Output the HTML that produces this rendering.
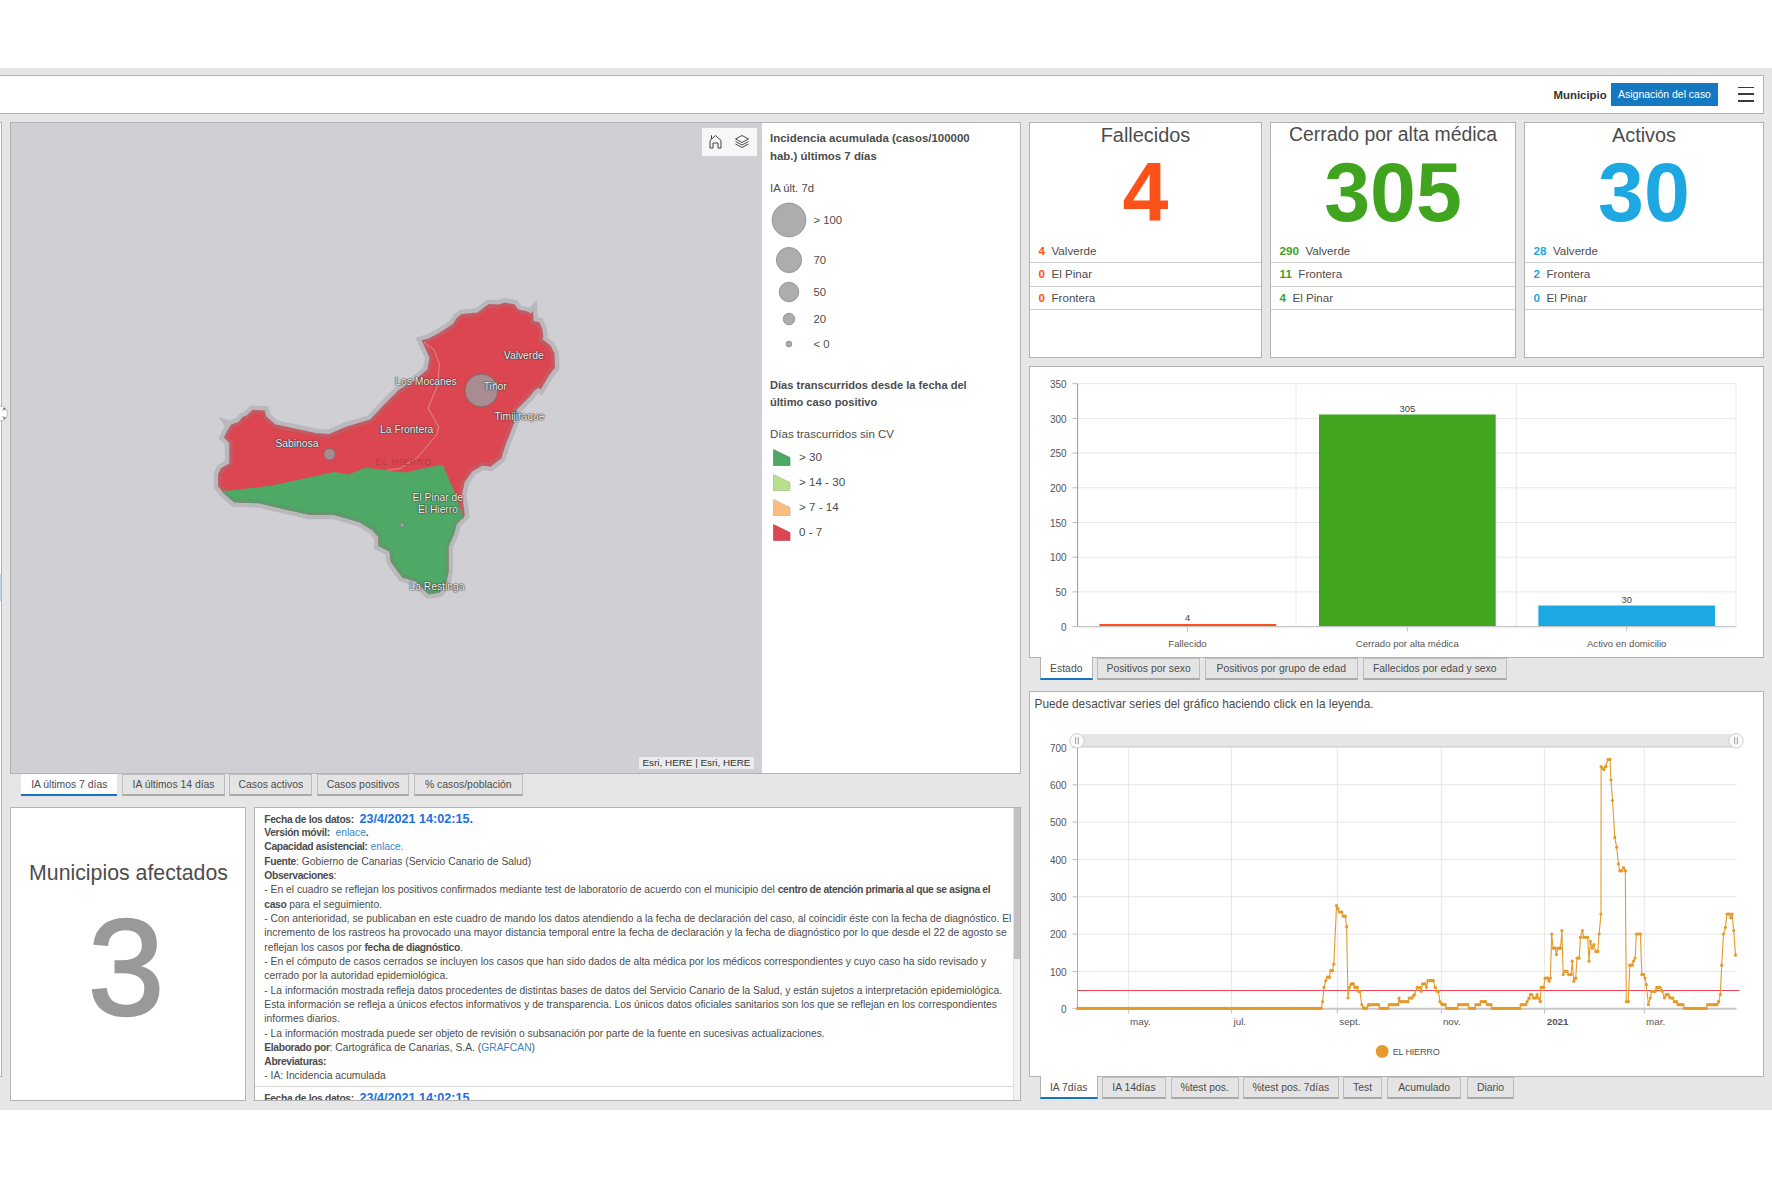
<!DOCTYPE html><html><head><meta charset="utf-8"><style>
*{box-sizing:border-box;margin:0;padding:0}
html,body{width:1772px;height:1181px;overflow:hidden;background:#fff;font-family:"Liberation Sans",sans-serif;color:#4c4c4c}
.a{position:absolute;white-space:nowrap}
.pnl{position:absolute;background:#fff;border:1px solid #b3b3b3}
.tab{position:absolute;background:#e6e6e6;border:1px solid #b5b5b5;border-top-color:#c8c8c8;font-size:10.4px;color:#555;text-align:center;white-space:nowrap}
.tab.act{background:#fff;border:none;border-bottom:2px solid #1a73c2}
.ham{position:absolute;left:1738px;width:16px;height:1.6px;background:#3a3a3a}
b{font-weight:bold}
</style></head><body>
<div class="a" style="left:0;top:68px;width:1772px;height:1042px;background:#e6e6e6"></div>
<div class="pnl" style="left:-2px;top:75px;width:1766px;height:39px"></div>
<div class="a" style="left:1553.5px;top:86.50px;font-size:11.4px;line-height:16px;color:#333;font-weight:bold;">Municipio</div>
<div class="a" style="left:1611px;top:83px;width:107px;height:23px;background:#1479c0"></div>
<div class="a" style="left:1611.0px;width:107px;text-align:center;top:87.00px;font-size:10.45px;line-height:15px;color:#fff;">Asignación del caso</div>
<div class="ham" style="top:86.6px"></div>
<div class="ham" style="top:93.3px"></div>
<div class="ham" style="top:100.0px"></div>
<div class="pnl" style="left:-10px;top:122px;width:12px;height:955px"></div>
<div class="a" style="left:0;top:574px;width:1px;height:27px;background:#bcd6ec"></div>
<svg class="a" style="left:0;top:400px" width="12" height="28" viewBox="0 0 12 28"><circle cx="0" cy="13.5" r="7.6" fill="#fff" stroke="#b8b8b8" stroke-width="1"/><path d="M2.5 10.5 L5 8.5 M5 8.5 L3.2 8.5 M5 8.5 L5 10.2 M2.5 16.5 L5 18.5 M5 18.5 L3.2 18.5 M5 18.5 L5 16.8" stroke="#777" stroke-width="1" fill="none"/></svg>
<div class="pnl" style="left:10px;top:122px;width:1011px;height:652px"></div>
<div class="a" style="left:11px;top:123px;width:751px;height:650px;background:#d0cfd4;overflow:hidden"></div>
<svg class="a" style="left:0;top:0" width="762" height="773" viewBox="0 0 762 773">
<path d="M219.9 485.6 L219.9 474.4 L222.4 469.5 L231.1 464.5 L231.1 442.1 L226.1 437.2 L228.6 432.2 L232.3 426.0 L239.8 423.5 L243.5 418.6 L247.2 417.3 L253.5 411.7 L263.4 412.3 L264.6 417.3 L274.6 426.0 L315.5 434.7 L329.2 435.9 L346.6 428.5 L371.4 421.0 L383.8 407.4 L393.7 397.4 L400.0 391.3 L416.0 381.7 L429.0 370.4 L431.4 357.5 L424.1 341.5 L429.8 339.9 L440.0 334.6 L454.0 325.5 L458.2 319.0 L462.4 315.7 L478.2 314.3 L489.4 305.9 L498.7 306.4 L504.3 304.5 L513.6 305.9 L517.4 311.0 L527.6 313.4 L530.9 316.2 L531.5 315.5 L532.0 322.7 L538.0 323.6 L540.6 329.6 L541.5 337.0 L539.7 339.2 L549.0 346.6 L552.7 353.8 L553.2 367.0 L548.2 373.3 L540.2 386.8 L538.5 385.6 L532.6 389.9 L528.7 395.2 L514.2 409.8 L515.8 413.8 L504.5 442.8 L499.7 457.3 L490.1 464.9 L482.0 463.6 L471.1 470.3 L463.0 481.2 L460.3 494.7 L463.0 515.0 L460.3 517.8 L454.9 523.2 L452.2 534.0 L446.7 546.2 L446.7 572.0 L444.0 584.2 L438.6 590.9 L429.1 592.3 L419.6 582.8 L416.9 580.1 L403.4 576.0 L392.5 561.1 L391.2 550.3 L380.3 544.9 L380.3 536.7 L373.6 528.6 L360.0 520.5 L334.1 512.9 L309.3 513.0 L284.5 507.5 L259.7 501.5 L234.8 500.5 L223.7 490.6 Z" fill="#b9b8bd" stroke="#b9b8bd" stroke-width="12.5" stroke-linejoin="miter" stroke-miterlimit="3"/>
<path d="M218.5 417 L233 421.5 L228 431 Z" fill="#b9b8bd"/>
<path d="M219.9 485.6 L219.9 474.4 L222.4 469.5 L231.1 464.5 L231.1 442.1 L226.1 437.2 L228.6 432.2 L232.3 426.0 L239.8 423.5 L243.5 418.6 L247.2 417.3 L253.5 411.7 L263.4 412.3 L264.6 417.3 L274.6 426.0 L315.5 434.7 L329.2 435.9 L346.6 428.5 L371.4 421.0 L383.8 407.4 L393.7 397.4 L400.0 391.3 L416.0 381.7 L429.0 370.4 L431.4 357.5 L424.1 341.5 L429.8 339.9 L440.0 334.6 L454.0 325.5 L458.2 319.0 L462.4 315.7 L478.2 314.3 L489.4 305.9 L498.7 306.4 L504.3 304.5 L513.6 305.9 L517.4 311.0 L527.6 313.4 L530.9 316.2 L531.5 315.5 L532.0 322.7 L538.0 323.6 L540.6 329.6 L541.5 337.0 L539.7 339.2 L549.0 346.6 L552.7 353.8 L553.2 367.0 L548.2 373.3 L540.2 386.8 L538.5 385.6 L532.6 389.9 L528.7 395.2 L514.2 409.8 L515.8 413.8 L504.5 442.8 L499.7 457.3 L490.1 464.9 L482.0 463.6 L471.1 470.3 L463.0 481.2 L460.3 494.7 L463.0 515.0 L460.3 517.8 L454.9 523.2 L452.2 534.0 L446.7 546.2 L446.7 572.0 L444.0 584.2 L438.6 590.9 L429.1 592.3 L419.6 582.8 L416.9 580.1 L403.4 576.0 L392.5 561.1 L391.2 550.3 L380.3 544.9 L380.3 536.7 L373.6 528.6 L360.0 520.5 L334.1 512.9 L309.3 513.0 L284.5 507.5 L259.7 501.5 L234.8 500.5 L223.7 490.6 Z" fill="#dc4650" stroke="#c45a63" stroke-width="3.6" stroke-linejoin="miter" stroke-miterlimit="3"/>
<path d="M223.7 491.2 L272.0 485.6 L334.1 471.9 L349.0 474.4 L365.2 467.6 L390.0 470.7 L404.9 472.6 L430.0 467.0 L442.7 464.9 L453.5 489.3 L463.0 516.4 L460.3 517.8 L454.9 523.2 L452.2 534.0 L446.7 546.2 L446.7 572.0 L444.0 584.2 L438.6 590.9 L429.1 592.3 L419.6 582.8 L416.9 580.1 L403.4 576.0 L392.5 561.1 L391.2 550.3 L380.3 544.9 L380.3 536.7 L373.6 528.6 L360.0 520.5 L334.1 512.9 L309.3 513.0 L284.5 507.5 L259.7 501.5 L234.8 500.5 Z" fill="#4ea866" stroke="none"/>
<path d="M463.0 516.4 L460.3 517.8 L454.9 523.2 L452.2 534.0 L446.7 546.2 L446.7 572.0 L444.0 584.2 L438.6 590.9 L429.1 592.3 L419.6 582.8 L416.9 580.1 L403.4 576.0 L392.5 561.1 L391.2 550.3 L380.3 544.9 L380.3 536.7 L373.6 528.6 L360.0 520.5 L334.1 512.9 L309.3 513.0 L284.5 507.5 L259.7 501.5 L234.8 500.5 L223.7 491.2" fill="none" stroke="#5a9c6b" stroke-width="3.6" stroke-linejoin="miter" stroke-miterlimit="3"/>
<path d="M424.0 342.3 L433.8 349.5 L439.4 364.0 L437.8 384.9 L428.1 408.2 L438.6 426.7 L437.0 434.7 L423.7 450.0 L417.7 457.3 L400.0 468.5 L387.1 470.3" fill="none" stroke="#d99aa0" stroke-width="0.8"/>
<text x="404" y="465.3" font-family="Liberation Sans" font-size="8.8" letter-spacing="1.1" fill="#ad3d47" text-anchor="middle">EL HIERRO</text>
<circle cx="481.4" cy="390.5" r="16.4" fill="#a98c90" stroke="#7c6c70" stroke-width="1"/>
<circle cx="329.5" cy="454.3" r="5.8" fill="#a98c90" stroke="#7c6c70" stroke-width="1"/>
<circle cx="402.2" cy="525" r="2.4" fill="#8fa895" stroke="#6f7f73" stroke-width="0.8"/>
</svg>
<div class="a" style="left:483.4px;width:80.80000000000007px;text-align:center;top:348.6px;font-size:10.3px;line-height:14px;color:#f2f2f2;text-shadow:0 0 1.5px #333,0 0 1px #333,0 0 1px #333">Valverde</div>
<div class="a" style="left:375.7px;width:100.60000000000002px;text-align:center;top:374.5px;font-size:10.3px;line-height:14px;color:#f2f2f2;text-shadow:0 0 1.5px #333,0 0 1px #333,0 0 1px #333">Los Mocanes</div>
<div class="a" style="left:463.6px;width:63.299999999999955px;text-align:center;top:379.5px;font-size:10.3px;line-height:14px;color:#f2f2f2;text-shadow:0 0 1.5px #333,0 0 1px #333,0 0 1px #333">Tiñor</div>
<div class="a" style="left:474.9px;width:89.0px;text-align:center;top:410.2px;font-size:10.3px;line-height:14px;color:#f2f2f2;text-shadow:0 0 1.5px #333,0 0 1px #333,0 0 1px #333">Timijiraque</div>
<div class="a" style="left:360.8px;width:91.80000000000001px;text-align:center;top:422.9px;font-size:10.3px;line-height:14px;color:#f2f2f2;text-shadow:0 0 1.5px #333,0 0 1px #333,0 0 1px #333">La Frontera</div>
<div class="a" style="left:255.8px;width:82.19999999999999px;text-align:center;top:437.3px;font-size:10.3px;line-height:14px;color:#f2f2f2;text-shadow:0 0 1.5px #333,0 0 1px #333,0 0 1px #333">Sabinosa</div>
<div class="a" style="left:392.9px;width:89.70000000000005px;text-align:center;top:491.1px;font-size:10.3px;line-height:14px;color:#f2f2f2;text-shadow:0 0 1.5px #333,0 0 1px #333,0 0 1px #333">El Pinar de</div>
<div class="a" style="left:398.3px;width:79.30000000000001px;text-align:center;top:502.6px;font-size:10.3px;line-height:14px;color:#f2f2f2;text-shadow:0 0 1.5px #333,0 0 1px #333,0 0 1px #333">El Hierro</div>
<div class="a" style="left:389.5px;width:94.80000000000001px;text-align:center;top:579.9px;font-size:10.3px;line-height:14px;color:#f2f2f2;text-shadow:0 0 1.5px #333,0 0 1px #333,0 0 1px #333">La Restinga</div>
<div class="a" style="left:702px;top:127.5px;width:54.5px;height:28.5px;background:#f7f7f7"></div>
<svg class="a" style="left:702px;top:127px" width="55" height="29" viewBox="0 0 55 29"><path d="M8 21 L8 13.5 L13.5 8.5 L19 13.5 L19 21 M8 21 L11 21 L11 16 L16 16 L16 21 L19 21 M9.5 12 L9.5 8.3" fill="none" stroke="#404040" stroke-width="1" stroke-linejoin="round"/><path d="M33.5 12 L40 8.5 L46.5 12 L40 15.5 Z M33.5 14.5 L40 18 L46.5 14.5 M33.5 17 L40 20.5 L46.5 17" fill="none" stroke="#404040" stroke-width="0.95" stroke-linejoin="round"/></svg>
<div class="a" style="left:639px;top:756.5px;width:115px;height:12.5px;background:rgba(240,240,240,0.85)"></div>
<div class="a" style="left:642.5px;top:755.80px;font-size:9.9px;line-height:14px;color:#333;">Esri, HERE | Esri, HERE</div>
<div class="a" style="left:770px;top:130.20px;font-size:11.45px;line-height:16px;color:#4c4c4c;font-weight:bold;">Incidencia acumulada (casos/100000</div>
<div class="a" style="left:770px;top:147.80px;font-size:11.45px;line-height:16px;color:#4c4c4c;font-weight:bold;">hab.) últimos 7 días</div>
<div class="a" style="left:770px;top:179.60px;font-size:11.3px;line-height:16px;color:#4c4c4c;">IA últ. 7d</div>
<svg class="a" style="left:769px;top:200.4px" width="40" height="40"><circle cx="20" cy="20" r="16.9" fill="#adadad" stroke="#8a8a8a" stroke-width="0.8"/></svg>
<div class="a" style="left:813.4px;top:212.40px;font-size:11.3px;line-height:16px;color:#4c4c4c;">&gt; 100</div>
<svg class="a" style="left:769px;top:239.60000000000002px" width="40" height="40"><circle cx="20" cy="20" r="12.6" fill="#adadad" stroke="#8a8a8a" stroke-width="0.8"/></svg>
<div class="a" style="left:813.4px;top:251.60px;font-size:11.3px;line-height:16px;color:#4c4c4c;">70</div>
<svg class="a" style="left:769px;top:272px" width="40" height="40"><circle cx="20" cy="20" r="9.8" fill="#adadad" stroke="#8a8a8a" stroke-width="0.8"/></svg>
<div class="a" style="left:813.4px;top:284.00px;font-size:11.3px;line-height:16px;color:#4c4c4c;">50</div>
<svg class="a" style="left:769px;top:299px" width="40" height="40"><circle cx="20" cy="20" r="5.8" fill="#adadad" stroke="#8a8a8a" stroke-width="0.8"/></svg>
<div class="a" style="left:813.4px;top:311.00px;font-size:11.3px;line-height:16px;color:#4c4c4c;">20</div>
<svg class="a" style="left:769px;top:323.7px" width="40" height="40"><circle cx="20" cy="20" r="2.9" fill="#adadad" stroke="#8a8a8a" stroke-width="0.8"/></svg>
<div class="a" style="left:813.4px;top:335.70px;font-size:11.3px;line-height:16px;color:#4c4c4c;">&lt; 0</div>
<div class="a" style="left:770px;top:376.80px;font-size:11.1px;line-height:16px;color:#4c4c4c;font-weight:bold;">Días transcurridos desde la fecha del</div>
<div class="a" style="left:770px;top:394.20px;font-size:11.1px;line-height:16px;color:#4c4c4c;font-weight:bold;">último caso positivo</div>
<div class="a" style="left:770px;top:425.50px;font-size:11.5px;line-height:16px;color:#4c4c4c;">Días trascurridos sin CV</div>
<svg class="a" style="left:773px;top:449px" width="18" height="17"><path d="M0.5 0.5 L17 8.5 L17 16.5 L0.5 16.5 Z" fill="#4ea866" stroke="#3f8a55" stroke-width="0.6"/></svg>
<div class="a" style="left:799px;top:449.00px;font-size:11.6px;line-height:16px;color:#4c4c4c;">&gt; 30</div>
<svg class="a" style="left:773px;top:474px" width="18" height="17"><path d="M0.5 0.5 L17 8.5 L17 16.5 L0.5 16.5 Z" fill="#b8e08a" stroke="#98b878" stroke-width="0.6"/></svg>
<div class="a" style="left:799px;top:474.00px;font-size:11.6px;line-height:16px;color:#4c4c4c;">&gt; 14 - 30</div>
<svg class="a" style="left:773px;top:499px" width="18" height="17"><path d="M0.5 0.5 L17 8.5 L17 16.5 L0.5 16.5 Z" fill="#fdbd80" stroke="#d8a070" stroke-width="0.6"/></svg>
<div class="a" style="left:799px;top:499.00px;font-size:11.6px;line-height:16px;color:#4c4c4c;">&gt; 7 - 14</div>
<svg class="a" style="left:773px;top:524px" width="18" height="17"><path d="M0.5 0.5 L17 8.5 L17 16.5 L0.5 16.5 Z" fill="#dc4650" stroke="#b83a44" stroke-width="0.6"/></svg>
<div class="a" style="left:799px;top:524.00px;font-size:11.6px;line-height:16px;color:#4c4c4c;">0 - 7</div>
<div class="a" style="left:21.3px;top:773.5px;width:96.0px;height:22.700000000000045px;background:#fff;border-bottom:2.4px solid #1674c2;text-align:center;line-height:21.700000000000045px;font-size:10.4px;color:#4c4c4c">IA últimos 7 días</div>
<div class="a" style="left:122.4px;top:773.6px;width:102.29999999999998px;height:22.0px;background:#e4e4e4;border:1px solid #bdbdbd;border-bottom:2px solid #aaa;text-align:center;line-height:19.0px;font-size:10.4px;color:#4c4c4c">IA últimos 14 días</div>
<div class="a" style="left:229.2px;top:773.6px;width:83.19999999999999px;height:22.0px;background:#e4e4e4;border:1px solid #bdbdbd;border-bottom:2px solid #aaa;text-align:center;line-height:19.0px;font-size:10.4px;color:#4c4c4c">Casos activos</div>
<div class="a" style="left:317px;top:773.6px;width:92.30000000000001px;height:22.0px;background:#e4e4e4;border:1px solid #bdbdbd;border-bottom:2px solid #aaa;text-align:center;line-height:19.0px;font-size:10.4px;color:#4c4c4c">Casos positivos</div>
<div class="a" style="left:413.9px;top:773.6px;width:108.80000000000007px;height:22.0px;background:#e4e4e4;border:1px solid #bdbdbd;border-bottom:2px solid #aaa;text-align:center;line-height:19.0px;font-size:10.4px;color:#4c4c4c">% casos/población</div>
<div class="pnl" style="left:10px;top:807px;width:236px;height:294px"></div>
<div class="a" style="left:10.5px;width:236px;text-align:center;top:860.02px;font-size:21.3px;line-height:26px;color:#4c4c4c;">Municipios afectados</div>
<div class="a" style="left:8.0px;width:236px;text-align:center;top:885.53px;font-size:137px;line-height:164px;color:#999;-webkit-text-stroke:2.6px #999;">3</div>
<div class="pnl" style="left:254px;top:807px;width:767px;height:294px;overflow:hidden"></div>
<div class="a" style="left:1013px;top:808px;width:7px;height:292px;background:#f1f1f1;border-left:1px solid #e0e0e0"></div>
<div class="a" style="left:1013.5px;top:808px;width:6px;height:151px;background:#c2c2c2"></div>
<div class="a" style="left:255px;top:1085.5px;width:758px;height:1px;background:#d6d6d6"></div>
<div class="a" style="left:264.3px;top:811.70px;font-size:10.3px;line-height:14px;color:#4c4c4c;"><b style="letter-spacing:-0.35px">Fecha de los datos:</b>&nbsp; <span style="color:#1a6fe0;font-weight:bold;font-size:12.6px">23/4/2021 14:02:15.</span></div>
<div class="a" style="left:264.3px;top:826.02px;font-size:10.3px;line-height:14px;color:#4c4c4c;"><b style="letter-spacing:-0.35px">Versión móvil:</b>&nbsp; <span style="color:#3a86c8">enlace</span><b style="letter-spacing:-0.35px">.</b></div>
<div class="a" style="left:264.3px;top:840.34px;font-size:10.3px;line-height:14px;color:#4c4c4c;"><b style="letter-spacing:-0.35px">Capacidad asistencial:</b> <span style="color:#3a86c8">enlace.</span></div>
<div class="a" style="left:264.3px;top:854.66px;font-size:10.3px;line-height:14px;color:#4c4c4c;"><b style="letter-spacing:-0.35px">Fuente</b>: Gobierno de Canarias (Servicio Canario de Salud)</div>
<div class="a" style="left:264.3px;top:868.98px;font-size:10.3px;line-height:14px;color:#4c4c4c;"><b style="letter-spacing:-0.35px">Observaciones</b>:</div>
<div class="a" style="left:264.3px;top:883.30px;font-size:10.3px;line-height:14px;color:#4c4c4c;">- En el cuadro se reflejan los positivos confirmados mediante test de laboratorio de acuerdo con el municipio del <b style="letter-spacing:-0.35px">centro de atención primaria al que se asigna el</b></div>
<div class="a" style="left:264.3px;top:897.62px;font-size:10.3px;line-height:14px;color:#4c4c4c;"><b style="letter-spacing:-0.35px">caso</b> para el seguimiento.</div>
<div class="a" style="left:264.3px;top:911.94px;font-size:10.3px;line-height:14px;color:#4c4c4c;">- Con anterioridad, se publicaban en este cuadro de mando los datos atendiendo a la fecha de declaración del caso, al coincidir éste con la fecha de diagnóstico. El</div>
<div class="a" style="left:264.3px;top:926.26px;font-size:10.3px;line-height:14px;color:#4c4c4c;">incremento de los rastreos ha provocado una mayor distancia temporal entre la fecha de declaración y la fecha de diagnóstico por lo que desde el 22 de agosto se</div>
<div class="a" style="left:264.3px;top:940.58px;font-size:10.3px;line-height:14px;color:#4c4c4c;">reflejan los casos por <b style="letter-spacing:-0.35px">fecha de diagnóstico</b>.</div>
<div class="a" style="left:264.3px;top:954.90px;font-size:10.3px;line-height:14px;color:#4c4c4c;">- En el cómputo de casos cerrados se incluyen los casos que han sido dados de alta médica por los médicos correspondientes y cuyo caso ha sido revisado y</div>
<div class="a" style="left:264.3px;top:969.22px;font-size:10.3px;line-height:14px;color:#4c4c4c;">cerrado por la autoridad epidemiológica.</div>
<div class="a" style="left:264.3px;top:983.54px;font-size:10.3px;line-height:14px;color:#4c4c4c;">- La información mostrada refleja datos procedentes de distintas bases de datos del Servicio Canario de la Salud, y están sujetos a interpretación epidemiológica.</div>
<div class="a" style="left:264.3px;top:997.86px;font-size:10.3px;line-height:14px;color:#4c4c4c;">Esta información se refleja a únicos efectos informativos y de transparencia. Los únicos datos oficiales sanitarios son los que se reflejan en los correspondientes</div>
<div class="a" style="left:264.3px;top:1012.18px;font-size:10.3px;line-height:14px;color:#4c4c4c;">informes diarios.</div>
<div class="a" style="left:264.3px;top:1026.50px;font-size:10.3px;line-height:14px;color:#4c4c4c;">- La información mostrada puede ser objeto de revisión o subsanación por parte de la fuente en sucesivas actualizaciones.</div>
<div class="a" style="left:264.3px;top:1040.82px;font-size:10.3px;line-height:14px;color:#4c4c4c;"><b style="letter-spacing:-0.35px">Elaborado por</b>: Cartográfica de Canarias, S.A. (<span style="color:#3a86c8">GRAFCAN</span>)</div>
<div class="a" style="left:264.3px;top:1055.14px;font-size:10.3px;line-height:14px;color:#4c4c4c;"><b style="letter-spacing:-0.35px">Abreviaturas:</b></div>
<div class="a" style="left:264.3px;top:1069.46px;font-size:10.3px;line-height:14px;color:#4c4c4c;">- IA: Incidencia acumulada</div>
<div class="a" style="left:255px;top:1087px;width:758px;height:13px;overflow:hidden">
<div class="a" style="left:9.3px;top:3.5px;font-size:10.3px;line-height:14px;color:#4c4c4c"><b style="letter-spacing:-0.35px">Fecha de los datos:</b>&nbsp; <span style="color:#1a6fe0;font-weight:bold;font-size:12.6px">23/4/2021 14:02:15.</span></div>
</div>
<div class="pnl" style="left:1029px;top:122px;width:233px;height:236px"></div>
<div class="a" style="left:1029.0px;width:233px;text-align:center;top:122.60px;font-size:19.9px;line-height:24px;color:#4c4c4c;">Fallecidos</div>
<div class="a" style="left:1029.0px;width:233px;text-align:center;top:142.91px;font-size:82.5px;line-height:99px;color:#fc5118;font-weight:bold;">4</div>
<div class="a" style="left:1038.6px;top:242.70px;font-size:11.6px;line-height:16px;color:#4c4c4c;"><span style="color:#fc5118;font-weight:bold">4</span>&nbsp; Valverde</div>
<div class="a" style="left:1038.6px;top:266.10px;font-size:11.6px;line-height:16px;color:#4c4c4c;"><span style="color:#fc5118;font-weight:bold">0</span>&nbsp; El Pinar</div>
<div class="a" style="left:1038.6px;top:289.50px;font-size:11.6px;line-height:16px;color:#4c4c4c;"><span style="color:#fc5118;font-weight:bold">0</span>&nbsp; Frontera</div>
<div class="a" style="left:1030px;top:262.1px;width:231px;height:1px;background:#cfcfcf"></div>
<div class="a" style="left:1030px;top:285.6px;width:231px;height:1px;background:#cfcfcf"></div>
<div class="a" style="left:1030px;top:308.8px;width:231px;height:1px;background:#cfcfcf"></div>
<div class="pnl" style="left:1270px;top:122px;width:246px;height:236px"></div>
<div class="a" style="left:1270.0px;width:246px;text-align:center;top:123.28px;font-size:19.4px;line-height:23px;color:#4c4c4c;">Cerrado por alta médica</div>
<div class="a" style="left:1270.0px;width:246px;text-align:center;top:142.91px;font-size:82.5px;line-height:99px;color:#40a41e;font-weight:bold;">305</div>
<div class="a" style="left:1279.6px;top:242.70px;font-size:11.6px;line-height:16px;color:#4c4c4c;"><span style="color:#40a41e;font-weight:bold">290</span>&nbsp; Valverde</div>
<div class="a" style="left:1279.6px;top:266.10px;font-size:11.6px;line-height:16px;color:#4c4c4c;"><span style="color:#40a41e;font-weight:bold">11</span>&nbsp; Frontera</div>
<div class="a" style="left:1279.6px;top:289.50px;font-size:11.6px;line-height:16px;color:#4c4c4c;"><span style="color:#40a41e;font-weight:bold">4</span>&nbsp; El Pinar</div>
<div class="a" style="left:1271px;top:262.1px;width:244px;height:1px;background:#cfcfcf"></div>
<div class="a" style="left:1271px;top:285.6px;width:244px;height:1px;background:#cfcfcf"></div>
<div class="a" style="left:1271px;top:308.8px;width:244px;height:1px;background:#cfcfcf"></div>
<div class="pnl" style="left:1524px;top:122px;width:240px;height:236px"></div>
<div class="a" style="left:1524.0px;width:240px;text-align:center;top:122.60px;font-size:19.9px;line-height:24px;color:#4c4c4c;">Activos</div>
<div class="a" style="left:1524.0px;width:240px;text-align:center;top:142.91px;font-size:82.5px;line-height:99px;color:#1da8e2;font-weight:bold;">30</div>
<div class="a" style="left:1533.6px;top:242.70px;font-size:11.6px;line-height:16px;color:#4c4c4c;"><span style="color:#1da8e2;font-weight:bold">28</span>&nbsp; Valverde</div>
<div class="a" style="left:1533.6px;top:266.10px;font-size:11.6px;line-height:16px;color:#4c4c4c;"><span style="color:#1da8e2;font-weight:bold">2</span>&nbsp; Frontera</div>
<div class="a" style="left:1533.6px;top:289.50px;font-size:11.6px;line-height:16px;color:#4c4c4c;"><span style="color:#1da8e2;font-weight:bold">0</span>&nbsp; El Pinar</div>
<div class="a" style="left:1525px;top:262.1px;width:238px;height:1px;background:#cfcfcf"></div>
<div class="a" style="left:1525px;top:285.6px;width:238px;height:1px;background:#cfcfcf"></div>
<div class="a" style="left:1525px;top:308.8px;width:238px;height:1px;background:#cfcfcf"></div>
<div class="pnl" style="left:1029px;top:366px;width:735px;height:292px"></div>
<svg class="a" style="left:0;top:0" width="1772" height="700" viewBox="0 0 1772 700"><line x1="1077.6" y1="591.9" x2="1736" y2="591.9" stroke="#e8e8e8" stroke-width="1"/><line x1="1077.6" y1="557.2" x2="1736" y2="557.2" stroke="#e8e8e8" stroke-width="1"/><line x1="1077.6" y1="522.5" x2="1736" y2="522.5" stroke="#e8e8e8" stroke-width="1"/><line x1="1077.6" y1="487.8" x2="1736" y2="487.8" stroke="#e8e8e8" stroke-width="1"/><line x1="1077.6" y1="453.1" x2="1736" y2="453.1" stroke="#e8e8e8" stroke-width="1"/><line x1="1077.6" y1="418.4" x2="1736" y2="418.4" stroke="#e8e8e8" stroke-width="1"/><line x1="1077.6" y1="383.7" x2="1736" y2="383.7" stroke="#e8e8e8" stroke-width="1"/><line x1="1296" y1="383.7" x2="1296" y2="626.6" stroke="#e8e8e8" stroke-width="1"/><line x1="1516.3" y1="383.7" x2="1516.3" y2="626.6" stroke="#e8e8e8" stroke-width="1"/><line x1="1736" y1="383.7" x2="1736" y2="626.6" stroke="#e8e8e8" stroke-width="1"/><line x1="1072.5" y1="626.6" x2="1077.6" y2="626.6" stroke="#bbb" stroke-width="1"/><text x="1066.6" y="630.7" font-family="Liberation Sans" font-size="10" fill="#555" text-anchor="end">0</text><line x1="1072.5" y1="591.9" x2="1077.6" y2="591.9" stroke="#bbb" stroke-width="1"/><text x="1066.6" y="596.0" font-family="Liberation Sans" font-size="10" fill="#555" text-anchor="end">50</text><line x1="1072.5" y1="557.2" x2="1077.6" y2="557.2" stroke="#bbb" stroke-width="1"/><text x="1066.6" y="561.3" font-family="Liberation Sans" font-size="10" fill="#555" text-anchor="end">100</text><line x1="1072.5" y1="522.5" x2="1077.6" y2="522.5" stroke="#bbb" stroke-width="1"/><text x="1066.6" y="526.6" font-family="Liberation Sans" font-size="10" fill="#555" text-anchor="end">150</text><line x1="1072.5" y1="487.8" x2="1077.6" y2="487.8" stroke="#bbb" stroke-width="1"/><text x="1066.6" y="491.9" font-family="Liberation Sans" font-size="10" fill="#555" text-anchor="end">200</text><line x1="1072.5" y1="453.1" x2="1077.6" y2="453.1" stroke="#bbb" stroke-width="1"/><text x="1066.6" y="457.2" font-family="Liberation Sans" font-size="10" fill="#555" text-anchor="end">250</text><line x1="1072.5" y1="418.4" x2="1077.6" y2="418.4" stroke="#bbb" stroke-width="1"/><text x="1066.6" y="422.5" font-family="Liberation Sans" font-size="10" fill="#555" text-anchor="end">300</text><line x1="1072.5" y1="383.7" x2="1077.6" y2="383.7" stroke="#bbb" stroke-width="1"/><text x="1066.6" y="387.8" font-family="Liberation Sans" font-size="10" fill="#555" text-anchor="end">350</text><line x1="1077.6" y1="383.7" x2="1077.6" y2="626.6" stroke="#999" stroke-width="1"/><rect x="1099.4" y="624" width="176.8" height="2.6" fill="#fc5118"/><rect x="1319" y="414.5" width="176.7" height="212.1" fill="#41a51f"/><rect x="1538.4" y="605.5" width="176.6" height="21.1" fill="#1ca8e3"/><line x1="1077.6" y1="626.6" x2="1736" y2="626.6" stroke="#c4c4c4" stroke-width="1.2"/><line x1="1187.5" y1="626.6" x2="1187.5" y2="631.5" stroke="#c4c4c4" stroke-width="1"/><text x="1187.5" y="646.5" font-family="Liberation Sans" font-size="9.6" fill="#555" text-anchor="middle">Fallecido</text><text x="1187.5" y="620.6999999999999" font-family="Liberation Sans" font-size="9.4" fill="#444" text-anchor="middle">4</text><line x1="1407.3" y1="626.6" x2="1407.3" y2="631.5" stroke="#c4c4c4" stroke-width="1"/><text x="1407.3" y="646.5" font-family="Liberation Sans" font-size="9.6" fill="#555" text-anchor="middle">Cerrado por alta médica</text><text x="1407.3" y="412.29999999999995" font-family="Liberation Sans" font-size="9.4" fill="#444" text-anchor="middle">305</text><line x1="1626.7" y1="626.6" x2="1626.7" y2="631.5" stroke="#c4c4c4" stroke-width="1"/><text x="1626.7" y="646.5" font-family="Liberation Sans" font-size="9.6" fill="#555" text-anchor="middle">Activo en domicilio</text><text x="1626.7" y="603.1999999999999" font-family="Liberation Sans" font-size="9.4" fill="#444" text-anchor="middle">30</text></svg>
<div class="a" style="left:1039.8px;top:657.5px;width:53.0px;height:22.5px;background:#fff;border-left:1px solid #b3b3b3;border-right:1px solid #b3b3b3;border-bottom:2.4px solid #1674c2;text-align:center;line-height:21.5px;font-size:10.4px;color:#4c4c4c">Estado</div>
<div class="a" style="left:1040.8px;top:655.9px;width:51.0px;height:2px;background:#fff"></div>
<div class="a" style="left:1097.3px;top:657.5px;width:102.70000000000005px;height:22.299999999999955px;background:#e4e4e4;border:1px solid #bdbdbd;border-bottom:2px solid #aaa;text-align:center;line-height:19.299999999999955px;font-size:10.4px;color:#4c4c4c">Positivos por sexo</div>
<div class="a" style="left:1205px;top:657.5px;width:152.5px;height:22.299999999999955px;background:#e4e4e4;border:1px solid #bdbdbd;border-bottom:2px solid #aaa;text-align:center;line-height:19.299999999999955px;font-size:10.4px;color:#4c4c4c">Positivos por grupo de edad</div>
<div class="a" style="left:1362.6px;top:657.5px;width:144.4000000000001px;height:22.299999999999955px;background:#e4e4e4;border:1px solid #bdbdbd;border-bottom:2px solid #aaa;text-align:center;line-height:19.299999999999955px;font-size:10.4px;color:#4c4c4c">Fallecidos por edad y sexo</div>
<div class="pnl" style="left:1029px;top:691px;width:735px;height:386px"></div>
<div class="a" style="left:1034.5px;top:695.50px;font-size:11.85px;line-height:17px;color:#4c4c4c;">Puede desactivar series del gráfico haciendo click en la leyenda.</div>
<svg class="a" style="left:0;top:0" width="1772" height="1181" viewBox="0 0 1772 1181"><rect x="1077" y="734" width="659" height="12.8" fill="#e6e6e6"/><line x1="1077" y1="746.5" x2="1736" y2="746.5" stroke="#d4d4d4" stroke-width="1"/><line x1="1077.5" y1="971.4" x2="1736.5" y2="971.4" stroke="#e6e6e6" stroke-width="1"/><line x1="1077.5" y1="934.1" x2="1736.5" y2="934.1" stroke="#e6e6e6" stroke-width="1"/><line x1="1077.5" y1="896.8" x2="1736.5" y2="896.8" stroke="#e6e6e6" stroke-width="1"/><line x1="1077.5" y1="859.4" x2="1736.5" y2="859.4" stroke="#e6e6e6" stroke-width="1"/><line x1="1077.5" y1="822.1" x2="1736.5" y2="822.1" stroke="#e6e6e6" stroke-width="1"/><line x1="1077.5" y1="784.8" x2="1736.5" y2="784.8" stroke="#e6e6e6" stroke-width="1"/><line x1="1077.5" y1="747.5" x2="1736.5" y2="747.5" stroke="#e6e6e6" stroke-width="1"/><line x1="1128.7" y1="747" x2="1128.7" y2="1008.7" stroke="#e6e6e6" stroke-width="1"/><line x1="1128.7" y1="1008.7" x2="1128.7" y2="1013.5" stroke="#bbb" stroke-width="1"/><line x1="1231.4" y1="747" x2="1231.4" y2="1008.7" stroke="#e6e6e6" stroke-width="1"/><line x1="1231.4" y1="1008.7" x2="1231.4" y2="1013.5" stroke="#bbb" stroke-width="1"/><line x1="1337.3" y1="747" x2="1337.3" y2="1008.7" stroke="#e6e6e6" stroke-width="1"/><line x1="1337.3" y1="1008.7" x2="1337.3" y2="1013.5" stroke="#bbb" stroke-width="1"/><line x1="1441.3" y1="747" x2="1441.3" y2="1008.7" stroke="#e6e6e6" stroke-width="1"/><line x1="1441.3" y1="1008.7" x2="1441.3" y2="1013.5" stroke="#bbb" stroke-width="1"/><line x1="1544.4" y1="747" x2="1544.4" y2="1008.7" stroke="#e6e6e6" stroke-width="1"/><line x1="1544.4" y1="1008.7" x2="1544.4" y2="1013.5" stroke="#bbb" stroke-width="1"/><line x1="1644.3" y1="747" x2="1644.3" y2="1008.7" stroke="#e6e6e6" stroke-width="1"/><line x1="1644.3" y1="1008.7" x2="1644.3" y2="1013.5" stroke="#bbb" stroke-width="1"/><line x1="1072.5" y1="1008.7" x2="1077.5" y2="1008.7" stroke="#bbb" stroke-width="1"/><text x="1066.6" y="1012.8" font-family="Liberation Sans" font-size="10" fill="#555" text-anchor="end">0</text><line x1="1072.5" y1="971.4" x2="1077.5" y2="971.4" stroke="#bbb" stroke-width="1"/><text x="1066.6" y="975.5" font-family="Liberation Sans" font-size="10" fill="#555" text-anchor="end">100</text><line x1="1072.5" y1="934.1" x2="1077.5" y2="934.1" stroke="#bbb" stroke-width="1"/><text x="1066.6" y="938.2" font-family="Liberation Sans" font-size="10" fill="#555" text-anchor="end">200</text><line x1="1072.5" y1="896.8" x2="1077.5" y2="896.8" stroke="#bbb" stroke-width="1"/><text x="1066.6" y="900.9" font-family="Liberation Sans" font-size="10" fill="#555" text-anchor="end">300</text><line x1="1072.5" y1="859.4" x2="1077.5" y2="859.4" stroke="#bbb" stroke-width="1"/><text x="1066.6" y="863.5" font-family="Liberation Sans" font-size="10" fill="#555" text-anchor="end">400</text><line x1="1072.5" y1="822.1" x2="1077.5" y2="822.1" stroke="#bbb" stroke-width="1"/><text x="1066.6" y="826.2" font-family="Liberation Sans" font-size="10" fill="#555" text-anchor="end">500</text><line x1="1072.5" y1="784.8" x2="1077.5" y2="784.8" stroke="#bbb" stroke-width="1"/><text x="1066.6" y="788.9" font-family="Liberation Sans" font-size="10" fill="#555" text-anchor="end">600</text><line x1="1072.5" y1="747.5" x2="1077.5" y2="747.5" stroke="#bbb" stroke-width="1"/><text x="1066.6" y="751.6" font-family="Liberation Sans" font-size="10" fill="#555" text-anchor="end">700</text><line x1="1077.5" y1="747" x2="1077.5" y2="1008.7" stroke="#aaa" stroke-width="1"/><line x1="1077.5" y1="1008.7" x2="1736.5" y2="1008.7" stroke="#c8c8c8" stroke-width="2"/><text x="1140.3" y="1024.9" font-family="Liberation Sans" font-size="9.8" fill="#555" text-anchor="middle">may.</text><text x="1239.8" y="1024.9" font-family="Liberation Sans" font-size="9.8" fill="#555" text-anchor="middle">jul.</text><text x="1349.9" y="1024.9" font-family="Liberation Sans" font-size="9.8" fill="#555" text-anchor="middle">sept.</text><text x="1451.8" y="1024.9" font-family="Liberation Sans" font-size="9.8" fill="#555" text-anchor="middle">nov.</text><text x="1557.6" y="1024.9" font-family="Liberation Sans" font-size="9.8" fill="#555" text-anchor="middle" font-weight="bold">2021</text><text x="1655.6" y="1024.9" font-family="Liberation Sans" font-size="9.8" fill="#555" text-anchor="middle">mar.</text><line x1="1077.5" y1="990.5" x2="1739.5" y2="990.5" stroke="#ef4658" stroke-width="1.1"/><polyline points="1077.5,1008.4 1321.3,1008.4 1322.6,1001.7 1324.0,987.4 1325.8,980.7 1327.4,977.2 1329.3,977.2 1330.6,970.6 1332.5,970.6 1333.8,964.2 1336.5,905.6 1338.0,908.8 1339.4,912.0 1341.8,912.0 1343.2,916.2 1345.3,916.2 1346.6,926.6 1348.0,998.0 1349.3,987.4 1351.4,983.9 1353.3,983.9 1355.1,987.4 1357.3,987.4 1358.6,991.3 1359.9,991.3 1361.8,1004.7 1363.9,1008.4 1366.6,1008.4 1368.7,1004.7 1378.6,1004.7 1379.9,1008.4 1387.9,1008.4 1389.2,1004.7 1398.0,1004.7 1399.0,998.0 1400.4,1001.7 1407.9,1001.7 1409.2,998.0 1411.9,998.0 1414.5,994.5 1417.2,987.4 1419.9,987.4 1421.2,991.3 1422.5,983.9 1425.2,983.9 1426.5,987.4 1427.9,980.7 1433.2,980.7 1435.3,987.4 1437.2,991.3 1438.5,991.3 1439.9,1001.7 1442.5,1004.7 1445.2,1004.7 1446.5,1008.4 1457.2,1008.4 1458.5,1004.7 1467.8,1004.7 1469.7,1008.4 1474.5,1008.4 1475.8,1004.7 1479.8,1004.7 1481.1,1001.7 1485.7,1001.7 1487.3,1004.7 1491.0,1004.7 1492.3,1008.4 1519.8,1008.4 1521.1,1004.7 1525.9,1004.7 1527.2,1001.7 1529.1,998.0 1530.4,994.5 1531.8,994.5 1533.6,998.0 1535.7,998.0 1537.1,994.5 1538.4,998.0 1540.3,1001.7 1541.1,987.4 1543.7,987.4 1545.1,978.0 1547.7,978.0 1549.1,981.2 1550.4,978.0 1551.7,934.0 1553.1,948.2 1555.2,948.2 1556.5,954.6 1557.9,948.2 1560.5,948.2 1561.9,930.6 1563.2,974.6 1565.0,971.4 1567.2,971.4 1568.5,974.6 1571.2,974.6 1572.2,961.2 1573.8,981.2 1575.7,978.0 1577.0,958.0 1579.2,958.0 1580.5,937.3 1582.4,930.6 1583.7,937.3 1587.7,937.3 1589.0,961.2 1590.4,941.3 1592.2,948.2 1593.8,944.7 1595.7,951.4 1597.8,951.4 1599.1,934.0 1601.0,914.1 1601.1,766.5 1604.0,769.6 1605.8,766.5 1607.9,759.5 1610.0,759.5 1611.0,780.0 1612.5,800.5 1614.8,837.4 1616.7,847.3 1618.4,864.0 1619.8,870.8 1621.9,870.8 1623.6,867.7 1625.3,870.8 1626.3,1001.7 1628.2,1001.7 1629.8,965.2 1632.4,965.2 1633.5,961.2 1635.1,958.0 1636.4,934.0 1640.4,934.0 1641.8,974.6 1643.6,974.6 1645.0,978.0 1646.3,984.7 1648.4,1004.7 1650.3,998.0 1651.6,991.3 1655.1,991.3 1657.0,987.4 1660.2,987.4 1662.3,991.3 1664.4,998.0 1666.3,994.5 1668.1,994.5 1670.3,998.0 1672.9,998.0 1674.3,1001.7 1676.4,1001.7 1678.3,1004.7 1683.1,1004.7 1684.4,1008.4 1706.2,1008.4 1707.6,1004.7 1716.9,1004.7 1718.7,1001.7 1720.3,994.5 1721.7,965.2 1723.5,934.0 1725.4,927.4 1727.0,914.1 1729.4,914.1 1730.7,917.8 1732.1,914.1 1733.7,930.6 1735.5,955.1" fill="none" stroke="#e49b2b" stroke-width="1.1" stroke-linejoin="round"/><g fill="#e49b2b"><circle cx="1077.5" cy="1008.4" r="1.6"/><circle cx="1079.2" cy="1008.4" r="1.6"/><circle cx="1080.9" cy="1008.4" r="1.6"/><circle cx="1082.6" cy="1008.4" r="1.6"/><circle cx="1084.3" cy="1008.4" r="1.6"/><circle cx="1086.0" cy="1008.4" r="1.6"/><circle cx="1087.6" cy="1008.4" r="1.6"/><circle cx="1089.3" cy="1008.4" r="1.6"/><circle cx="1091.0" cy="1008.4" r="1.6"/><circle cx="1092.7" cy="1008.4" r="1.6"/><circle cx="1094.4" cy="1008.4" r="1.6"/><circle cx="1096.1" cy="1008.4" r="1.6"/><circle cx="1097.8" cy="1008.4" r="1.6"/><circle cx="1099.5" cy="1008.4" r="1.6"/><circle cx="1101.2" cy="1008.4" r="1.6"/><circle cx="1102.8" cy="1008.4" r="1.6"/><circle cx="1104.5" cy="1008.4" r="1.6"/><circle cx="1106.2" cy="1008.4" r="1.6"/><circle cx="1107.9" cy="1008.4" r="1.6"/><circle cx="1109.6" cy="1008.4" r="1.6"/><circle cx="1111.3" cy="1008.4" r="1.6"/><circle cx="1113.0" cy="1008.4" r="1.6"/><circle cx="1114.7" cy="1008.4" r="1.6"/><circle cx="1116.4" cy="1008.4" r="1.6"/><circle cx="1118.1" cy="1008.4" r="1.6"/><circle cx="1119.8" cy="1008.4" r="1.6"/><circle cx="1121.4" cy="1008.4" r="1.6"/><circle cx="1123.1" cy="1008.4" r="1.6"/><circle cx="1124.8" cy="1008.4" r="1.6"/><circle cx="1126.5" cy="1008.4" r="1.6"/><circle cx="1128.2" cy="1008.4" r="1.6"/><circle cx="1129.9" cy="1008.4" r="1.6"/><circle cx="1131.6" cy="1008.4" r="1.6"/><circle cx="1133.3" cy="1008.4" r="1.6"/><circle cx="1135.0" cy="1008.4" r="1.6"/><circle cx="1136.7" cy="1008.4" r="1.6"/><circle cx="1138.3" cy="1008.4" r="1.6"/><circle cx="1140.0" cy="1008.4" r="1.6"/><circle cx="1141.7" cy="1008.4" r="1.6"/><circle cx="1143.4" cy="1008.4" r="1.6"/><circle cx="1145.1" cy="1008.4" r="1.6"/><circle cx="1146.8" cy="1008.4" r="1.6"/><circle cx="1148.5" cy="1008.4" r="1.6"/><circle cx="1150.2" cy="1008.4" r="1.6"/><circle cx="1151.9" cy="1008.4" r="1.6"/><circle cx="1153.5" cy="1008.4" r="1.6"/><circle cx="1155.2" cy="1008.4" r="1.6"/><circle cx="1156.9" cy="1008.4" r="1.6"/><circle cx="1158.6" cy="1008.4" r="1.6"/><circle cx="1160.3" cy="1008.4" r="1.6"/><circle cx="1162.0" cy="1008.4" r="1.6"/><circle cx="1163.7" cy="1008.4" r="1.6"/><circle cx="1165.4" cy="1008.4" r="1.6"/><circle cx="1167.1" cy="1008.4" r="1.6"/><circle cx="1168.8" cy="1008.4" r="1.6"/><circle cx="1170.5" cy="1008.4" r="1.6"/><circle cx="1172.1" cy="1008.4" r="1.6"/><circle cx="1173.8" cy="1008.4" r="1.6"/><circle cx="1175.5" cy="1008.4" r="1.6"/><circle cx="1177.2" cy="1008.4" r="1.6"/><circle cx="1178.9" cy="1008.4" r="1.6"/><circle cx="1180.6" cy="1008.4" r="1.6"/><circle cx="1182.3" cy="1008.4" r="1.6"/><circle cx="1184.0" cy="1008.4" r="1.6"/><circle cx="1185.7" cy="1008.4" r="1.6"/><circle cx="1187.3" cy="1008.4" r="1.6"/><circle cx="1189.0" cy="1008.4" r="1.6"/><circle cx="1190.7" cy="1008.4" r="1.6"/><circle cx="1192.4" cy="1008.4" r="1.6"/><circle cx="1194.1" cy="1008.4" r="1.6"/><circle cx="1195.8" cy="1008.4" r="1.6"/><circle cx="1197.5" cy="1008.4" r="1.6"/><circle cx="1199.2" cy="1008.4" r="1.6"/><circle cx="1200.9" cy="1008.4" r="1.6"/><circle cx="1202.6" cy="1008.4" r="1.6"/><circle cx="1204.2" cy="1008.4" r="1.6"/><circle cx="1205.9" cy="1008.4" r="1.6"/><circle cx="1207.6" cy="1008.4" r="1.6"/><circle cx="1209.3" cy="1008.4" r="1.6"/><circle cx="1211.0" cy="1008.4" r="1.6"/><circle cx="1212.7" cy="1008.4" r="1.6"/><circle cx="1214.4" cy="1008.4" r="1.6"/><circle cx="1216.1" cy="1008.4" r="1.6"/><circle cx="1217.8" cy="1008.4" r="1.6"/><circle cx="1219.5" cy="1008.4" r="1.6"/><circle cx="1221.2" cy="1008.4" r="1.6"/><circle cx="1222.8" cy="1008.4" r="1.6"/><circle cx="1224.5" cy="1008.4" r="1.6"/><circle cx="1226.2" cy="1008.4" r="1.6"/><circle cx="1227.9" cy="1008.4" r="1.6"/><circle cx="1229.6" cy="1008.4" r="1.6"/><circle cx="1231.3" cy="1008.4" r="1.6"/><circle cx="1233.0" cy="1008.4" r="1.6"/><circle cx="1234.7" cy="1008.4" r="1.6"/><circle cx="1236.4" cy="1008.4" r="1.6"/><circle cx="1238.0" cy="1008.4" r="1.6"/><circle cx="1239.7" cy="1008.4" r="1.6"/><circle cx="1241.4" cy="1008.4" r="1.6"/><circle cx="1243.1" cy="1008.4" r="1.6"/><circle cx="1244.8" cy="1008.4" r="1.6"/><circle cx="1246.5" cy="1008.4" r="1.6"/><circle cx="1248.2" cy="1008.4" r="1.6"/><circle cx="1249.9" cy="1008.4" r="1.6"/><circle cx="1251.6" cy="1008.4" r="1.6"/><circle cx="1253.3" cy="1008.4" r="1.6"/><circle cx="1255.0" cy="1008.4" r="1.6"/><circle cx="1256.6" cy="1008.4" r="1.6"/><circle cx="1258.3" cy="1008.4" r="1.6"/><circle cx="1260.0" cy="1008.4" r="1.6"/><circle cx="1261.7" cy="1008.4" r="1.6"/><circle cx="1263.4" cy="1008.4" r="1.6"/><circle cx="1265.1" cy="1008.4" r="1.6"/><circle cx="1266.8" cy="1008.4" r="1.6"/><circle cx="1268.5" cy="1008.4" r="1.6"/><circle cx="1270.2" cy="1008.4" r="1.6"/><circle cx="1271.8" cy="1008.4" r="1.6"/><circle cx="1273.5" cy="1008.4" r="1.6"/><circle cx="1275.2" cy="1008.4" r="1.6"/><circle cx="1276.9" cy="1008.4" r="1.6"/><circle cx="1278.6" cy="1008.4" r="1.6"/><circle cx="1280.3" cy="1008.4" r="1.6"/><circle cx="1282.0" cy="1008.4" r="1.6"/><circle cx="1283.7" cy="1008.4" r="1.6"/><circle cx="1285.4" cy="1008.4" r="1.6"/><circle cx="1287.1" cy="1008.4" r="1.6"/><circle cx="1288.8" cy="1008.4" r="1.6"/><circle cx="1290.4" cy="1008.4" r="1.6"/><circle cx="1292.1" cy="1008.4" r="1.6"/><circle cx="1293.8" cy="1008.4" r="1.6"/><circle cx="1295.5" cy="1008.4" r="1.6"/><circle cx="1297.2" cy="1008.4" r="1.6"/><circle cx="1298.9" cy="1008.4" r="1.6"/><circle cx="1300.6" cy="1008.4" r="1.6"/><circle cx="1302.3" cy="1008.4" r="1.6"/><circle cx="1304.0" cy="1008.4" r="1.6"/><circle cx="1305.7" cy="1008.4" r="1.6"/><circle cx="1307.3" cy="1008.4" r="1.6"/><circle cx="1309.0" cy="1008.4" r="1.6"/><circle cx="1310.7" cy="1008.4" r="1.6"/><circle cx="1312.4" cy="1008.4" r="1.6"/><circle cx="1314.1" cy="1008.4" r="1.6"/><circle cx="1315.8" cy="1008.4" r="1.6"/><circle cx="1317.5" cy="1008.4" r="1.6"/><circle cx="1319.2" cy="1008.4" r="1.6"/><circle cx="1320.9" cy="1008.4" r="1.6"/><circle cx="1321.3" cy="1008.4" r="1.6"/><circle cx="1322.6" cy="1001.7" r="1.6"/><circle cx="1324.0" cy="987.4" r="1.6"/><circle cx="1325.8" cy="980.7" r="1.6"/><circle cx="1327.4" cy="977.2" r="1.6"/><circle cx="1329.1" cy="977.2" r="1.6"/><circle cx="1329.3" cy="977.2" r="1.6"/><circle cx="1330.6" cy="970.6" r="1.6"/><circle cx="1332.3" cy="970.6" r="1.6"/><circle cx="1332.5" cy="970.6" r="1.6"/><circle cx="1333.8" cy="964.2" r="1.6"/><circle cx="1336.5" cy="905.6" r="1.6"/><circle cx="1338.0" cy="908.8" r="1.6"/><circle cx="1339.4" cy="912.0" r="1.6"/><circle cx="1341.1" cy="912.0" r="1.6"/><circle cx="1341.8" cy="912.0" r="1.6"/><circle cx="1343.2" cy="916.2" r="1.6"/><circle cx="1344.9" cy="916.2" r="1.6"/><circle cx="1345.3" cy="916.2" r="1.6"/><circle cx="1346.6" cy="926.6" r="1.6"/><circle cx="1348.0" cy="998.0" r="1.6"/><circle cx="1349.3" cy="987.4" r="1.6"/><circle cx="1351.0" cy="984.6" r="1.6"/><circle cx="1351.4" cy="983.9" r="1.6"/><circle cx="1353.1" cy="983.9" r="1.6"/><circle cx="1353.3" cy="983.9" r="1.6"/><circle cx="1355.0" cy="987.2" r="1.6"/><circle cx="1355.1" cy="987.4" r="1.6"/><circle cx="1356.8" cy="987.4" r="1.6"/><circle cx="1357.3" cy="987.4" r="1.6"/><circle cx="1358.6" cy="991.3" r="1.6"/><circle cx="1359.9" cy="991.3" r="1.6"/><circle cx="1361.8" cy="1004.7" r="1.6"/><circle cx="1363.5" cy="1007.7" r="1.6"/><circle cx="1363.9" cy="1008.4" r="1.6"/><circle cx="1365.6" cy="1008.4" r="1.6"/><circle cx="1366.6" cy="1008.4" r="1.6"/><circle cx="1368.3" cy="1005.4" r="1.6"/><circle cx="1368.7" cy="1004.7" r="1.6"/><circle cx="1370.4" cy="1004.7" r="1.6"/><circle cx="1372.1" cy="1004.7" r="1.6"/><circle cx="1373.8" cy="1004.7" r="1.6"/><circle cx="1375.5" cy="1004.7" r="1.6"/><circle cx="1377.2" cy="1004.7" r="1.6"/><circle cx="1378.6" cy="1004.7" r="1.6"/><circle cx="1379.9" cy="1008.4" r="1.6"/><circle cx="1381.6" cy="1008.4" r="1.6"/><circle cx="1383.3" cy="1008.4" r="1.6"/><circle cx="1385.0" cy="1008.4" r="1.6"/><circle cx="1386.7" cy="1008.4" r="1.6"/><circle cx="1387.9" cy="1008.4" r="1.6"/><circle cx="1389.2" cy="1004.7" r="1.6"/><circle cx="1390.9" cy="1004.7" r="1.6"/><circle cx="1392.6" cy="1004.7" r="1.6"/><circle cx="1394.3" cy="1004.7" r="1.6"/><circle cx="1396.0" cy="1004.7" r="1.6"/><circle cx="1397.7" cy="1004.7" r="1.6"/><circle cx="1398.0" cy="1004.7" r="1.6"/><circle cx="1399.0" cy="998.0" r="1.6"/><circle cx="1400.4" cy="1001.7" r="1.6"/><circle cx="1402.1" cy="1001.7" r="1.6"/><circle cx="1403.8" cy="1001.7" r="1.6"/><circle cx="1405.5" cy="1001.7" r="1.6"/><circle cx="1407.2" cy="1001.7" r="1.6"/><circle cx="1407.9" cy="1001.7" r="1.6"/><circle cx="1409.2" cy="998.0" r="1.6"/><circle cx="1410.9" cy="998.0" r="1.6"/><circle cx="1411.9" cy="998.0" r="1.6"/><circle cx="1413.6" cy="995.7" r="1.6"/><circle cx="1414.5" cy="994.5" r="1.6"/><circle cx="1417.2" cy="987.4" r="1.6"/><circle cx="1418.9" cy="987.4" r="1.6"/><circle cx="1419.9" cy="987.4" r="1.6"/><circle cx="1421.2" cy="991.3" r="1.6"/><circle cx="1422.5" cy="983.9" r="1.6"/><circle cx="1424.2" cy="983.9" r="1.6"/><circle cx="1425.2" cy="983.9" r="1.6"/><circle cx="1426.5" cy="987.4" r="1.6"/><circle cx="1427.9" cy="980.7" r="1.6"/><circle cx="1429.6" cy="980.7" r="1.6"/><circle cx="1431.3" cy="980.7" r="1.6"/><circle cx="1433.0" cy="980.7" r="1.6"/><circle cx="1433.2" cy="980.7" r="1.6"/><circle cx="1435.3" cy="987.4" r="1.6"/><circle cx="1437.0" cy="990.9" r="1.6"/><circle cx="1437.2" cy="991.3" r="1.6"/><circle cx="1438.5" cy="991.3" r="1.6"/><circle cx="1439.9" cy="1001.7" r="1.6"/><circle cx="1441.6" cy="1003.7" r="1.6"/><circle cx="1442.5" cy="1004.7" r="1.6"/><circle cx="1444.2" cy="1004.7" r="1.6"/><circle cx="1445.2" cy="1004.7" r="1.6"/><circle cx="1446.5" cy="1008.4" r="1.6"/><circle cx="1448.2" cy="1008.4" r="1.6"/><circle cx="1449.9" cy="1008.4" r="1.6"/><circle cx="1451.6" cy="1008.4" r="1.6"/><circle cx="1453.3" cy="1008.4" r="1.6"/><circle cx="1455.0" cy="1008.4" r="1.6"/><circle cx="1456.6" cy="1008.4" r="1.6"/><circle cx="1457.2" cy="1008.4" r="1.6"/><circle cx="1458.5" cy="1004.7" r="1.6"/><circle cx="1460.2" cy="1004.7" r="1.6"/><circle cx="1461.9" cy="1004.7" r="1.6"/><circle cx="1463.6" cy="1004.7" r="1.6"/><circle cx="1465.3" cy="1004.7" r="1.6"/><circle cx="1467.0" cy="1004.7" r="1.6"/><circle cx="1467.8" cy="1004.7" r="1.6"/><circle cx="1469.5" cy="1008.0" r="1.6"/><circle cx="1469.7" cy="1008.4" r="1.6"/><circle cx="1471.4" cy="1008.4" r="1.6"/><circle cx="1473.1" cy="1008.4" r="1.6"/><circle cx="1474.5" cy="1008.4" r="1.6"/><circle cx="1475.8" cy="1004.7" r="1.6"/><circle cx="1477.5" cy="1004.7" r="1.6"/><circle cx="1479.2" cy="1004.7" r="1.6"/><circle cx="1479.8" cy="1004.7" r="1.6"/><circle cx="1481.1" cy="1001.7" r="1.6"/><circle cx="1482.8" cy="1001.7" r="1.6"/><circle cx="1484.5" cy="1001.7" r="1.6"/><circle cx="1485.7" cy="1001.7" r="1.6"/><circle cx="1487.3" cy="1004.7" r="1.6"/><circle cx="1489.0" cy="1004.7" r="1.6"/><circle cx="1490.7" cy="1004.7" r="1.6"/><circle cx="1491.0" cy="1004.7" r="1.6"/><circle cx="1492.3" cy="1008.4" r="1.6"/><circle cx="1494.0" cy="1008.4" r="1.6"/><circle cx="1495.7" cy="1008.4" r="1.6"/><circle cx="1497.4" cy="1008.4" r="1.6"/><circle cx="1499.1" cy="1008.4" r="1.6"/><circle cx="1500.8" cy="1008.4" r="1.6"/><circle cx="1502.4" cy="1008.4" r="1.6"/><circle cx="1504.1" cy="1008.4" r="1.6"/><circle cx="1505.8" cy="1008.4" r="1.6"/><circle cx="1507.5" cy="1008.4" r="1.6"/><circle cx="1509.2" cy="1008.4" r="1.6"/><circle cx="1510.9" cy="1008.4" r="1.6"/><circle cx="1512.6" cy="1008.4" r="1.6"/><circle cx="1514.3" cy="1008.4" r="1.6"/><circle cx="1516.0" cy="1008.4" r="1.6"/><circle cx="1517.6" cy="1008.4" r="1.6"/><circle cx="1519.3" cy="1008.4" r="1.6"/><circle cx="1519.8" cy="1008.4" r="1.6"/><circle cx="1521.1" cy="1004.7" r="1.6"/><circle cx="1522.8" cy="1004.7" r="1.6"/><circle cx="1524.5" cy="1004.7" r="1.6"/><circle cx="1525.9" cy="1004.7" r="1.6"/><circle cx="1527.2" cy="1001.7" r="1.6"/><circle cx="1528.9" cy="998.4" r="1.6"/><circle cx="1529.1" cy="998.0" r="1.6"/><circle cx="1530.4" cy="994.5" r="1.6"/><circle cx="1531.8" cy="994.5" r="1.6"/><circle cx="1533.5" cy="997.8" r="1.6"/><circle cx="1533.6" cy="998.0" r="1.6"/><circle cx="1535.3" cy="998.0" r="1.6"/><circle cx="1535.7" cy="998.0" r="1.6"/><circle cx="1537.1" cy="994.5" r="1.6"/><circle cx="1538.4" cy="998.0" r="1.6"/><circle cx="1540.1" cy="1001.3" r="1.6"/><circle cx="1540.3" cy="1001.7" r="1.6"/><circle cx="1541.1" cy="987.4" r="1.6"/><circle cx="1542.8" cy="987.4" r="1.6"/><circle cx="1543.7" cy="987.4" r="1.6"/><circle cx="1545.1" cy="978.0" r="1.6"/><circle cx="1546.8" cy="978.0" r="1.6"/><circle cx="1547.7" cy="978.0" r="1.6"/><circle cx="1549.1" cy="981.2" r="1.6"/><circle cx="1550.4" cy="978.0" r="1.6"/><circle cx="1551.7" cy="934.0" r="1.6"/><circle cx="1553.1" cy="948.2" r="1.6"/><circle cx="1554.8" cy="948.2" r="1.6"/><circle cx="1555.2" cy="948.2" r="1.6"/><circle cx="1556.5" cy="954.6" r="1.6"/><circle cx="1557.9" cy="948.2" r="1.6"/><circle cx="1559.6" cy="948.2" r="1.6"/><circle cx="1560.5" cy="948.2" r="1.6"/><circle cx="1561.9" cy="930.6" r="1.6"/><circle cx="1563.2" cy="974.6" r="1.6"/><circle cx="1564.9" cy="971.6" r="1.6"/><circle cx="1565.0" cy="971.4" r="1.6"/><circle cx="1566.7" cy="971.4" r="1.6"/><circle cx="1567.2" cy="971.4" r="1.6"/><circle cx="1568.5" cy="974.6" r="1.6"/><circle cx="1570.2" cy="974.6" r="1.6"/><circle cx="1571.2" cy="974.6" r="1.6"/><circle cx="1572.2" cy="961.2" r="1.6"/><circle cx="1573.8" cy="981.2" r="1.6"/><circle cx="1575.5" cy="978.4" r="1.6"/><circle cx="1575.7" cy="978.0" r="1.6"/><circle cx="1577.0" cy="958.0" r="1.6"/><circle cx="1578.7" cy="958.0" r="1.6"/><circle cx="1579.2" cy="958.0" r="1.6"/><circle cx="1580.5" cy="937.3" r="1.6"/><circle cx="1582.4" cy="930.6" r="1.6"/><circle cx="1583.7" cy="937.3" r="1.6"/><circle cx="1585.4" cy="937.3" r="1.6"/><circle cx="1587.1" cy="937.3" r="1.6"/><circle cx="1587.7" cy="937.3" r="1.6"/><circle cx="1589.0" cy="961.2" r="1.6"/><circle cx="1590.4" cy="941.3" r="1.6"/><circle cx="1592.2" cy="948.2" r="1.6"/><circle cx="1593.8" cy="944.7" r="1.6"/><circle cx="1595.7" cy="951.4" r="1.6"/><circle cx="1597.4" cy="951.4" r="1.6"/><circle cx="1597.8" cy="951.4" r="1.6"/><circle cx="1599.1" cy="934.0" r="1.6"/><circle cx="1601.0" cy="914.1" r="1.6"/><circle cx="1601.1" cy="766.5" r="1.6"/><circle cx="1602.8" cy="768.3" r="1.6"/><circle cx="1604.0" cy="769.6" r="1.6"/><circle cx="1605.7" cy="766.7" r="1.6"/><circle cx="1605.8" cy="766.5" r="1.6"/><circle cx="1607.9" cy="759.5" r="1.6"/><circle cx="1609.6" cy="759.5" r="1.6"/><circle cx="1610.0" cy="759.5" r="1.6"/><circle cx="1611.0" cy="780.0" r="1.6"/><circle cx="1612.5" cy="800.5" r="1.6"/><circle cx="1614.8" cy="837.4" r="1.6"/><circle cx="1616.7" cy="847.3" r="1.6"/><circle cx="1618.4" cy="864.0" r="1.6"/><circle cx="1619.8" cy="870.8" r="1.6"/><circle cx="1621.5" cy="870.8" r="1.6"/><circle cx="1621.9" cy="870.8" r="1.6"/><circle cx="1623.6" cy="867.7" r="1.6"/><circle cx="1625.3" cy="870.8" r="1.6"/><circle cx="1625.3" cy="870.8" r="1.6"/><circle cx="1626.3" cy="1001.7" r="1.6"/><circle cx="1628.0" cy="1001.7" r="1.6"/><circle cx="1628.2" cy="1001.7" r="1.6"/><circle cx="1629.8" cy="965.2" r="1.6"/><circle cx="1631.5" cy="965.2" r="1.6"/><circle cx="1632.4" cy="965.2" r="1.6"/><circle cx="1633.5" cy="961.2" r="1.6"/><circle cx="1635.1" cy="958.0" r="1.6"/><circle cx="1636.4" cy="934.0" r="1.6"/><circle cx="1638.1" cy="934.0" r="1.6"/><circle cx="1639.8" cy="934.0" r="1.6"/><circle cx="1640.4" cy="934.0" r="1.6"/><circle cx="1641.8" cy="974.6" r="1.6"/><circle cx="1643.5" cy="974.6" r="1.6"/><circle cx="1643.6" cy="974.6" r="1.6"/><circle cx="1645.0" cy="978.0" r="1.6"/><circle cx="1646.3" cy="984.7" r="1.6"/><circle cx="1648.4" cy="1004.7" r="1.6"/><circle cx="1650.3" cy="998.0" r="1.6"/><circle cx="1651.6" cy="991.3" r="1.6"/><circle cx="1653.3" cy="991.3" r="1.6"/><circle cx="1655.0" cy="991.3" r="1.6"/><circle cx="1655.1" cy="991.3" r="1.6"/><circle cx="1656.8" cy="987.8" r="1.6"/><circle cx="1657.0" cy="987.4" r="1.6"/><circle cx="1658.7" cy="987.4" r="1.6"/><circle cx="1660.2" cy="987.4" r="1.6"/><circle cx="1661.9" cy="990.5" r="1.6"/><circle cx="1662.3" cy="991.3" r="1.6"/><circle cx="1664.4" cy="998.0" r="1.6"/><circle cx="1666.1" cy="994.9" r="1.6"/><circle cx="1666.3" cy="994.5" r="1.6"/><circle cx="1668.0" cy="994.5" r="1.6"/><circle cx="1668.1" cy="994.5" r="1.6"/><circle cx="1669.8" cy="997.2" r="1.6"/><circle cx="1670.3" cy="998.0" r="1.6"/><circle cx="1672.0" cy="998.0" r="1.6"/><circle cx="1672.9" cy="998.0" r="1.6"/><circle cx="1674.3" cy="1001.7" r="1.6"/><circle cx="1676.0" cy="1001.7" r="1.6"/><circle cx="1676.4" cy="1001.7" r="1.6"/><circle cx="1678.1" cy="1004.4" r="1.6"/><circle cx="1678.3" cy="1004.7" r="1.6"/><circle cx="1680.0" cy="1004.7" r="1.6"/><circle cx="1681.7" cy="1004.7" r="1.6"/><circle cx="1683.1" cy="1004.7" r="1.6"/><circle cx="1684.4" cy="1008.4" r="1.6"/><circle cx="1686.1" cy="1008.4" r="1.6"/><circle cx="1687.8" cy="1008.4" r="1.6"/><circle cx="1689.5" cy="1008.4" r="1.6"/><circle cx="1691.2" cy="1008.4" r="1.6"/><circle cx="1692.9" cy="1008.4" r="1.6"/><circle cx="1694.5" cy="1008.4" r="1.6"/><circle cx="1696.2" cy="1008.4" r="1.6"/><circle cx="1697.9" cy="1008.4" r="1.6"/><circle cx="1699.6" cy="1008.4" r="1.6"/><circle cx="1701.3" cy="1008.4" r="1.6"/><circle cx="1703.0" cy="1008.4" r="1.6"/><circle cx="1704.7" cy="1008.4" r="1.6"/><circle cx="1706.2" cy="1008.4" r="1.6"/><circle cx="1707.6" cy="1004.7" r="1.6"/><circle cx="1709.3" cy="1004.7" r="1.6"/><circle cx="1711.0" cy="1004.7" r="1.6"/><circle cx="1712.7" cy="1004.7" r="1.6"/><circle cx="1714.4" cy="1004.7" r="1.6"/><circle cx="1716.0" cy="1004.7" r="1.6"/><circle cx="1716.9" cy="1004.7" r="1.6"/><circle cx="1718.6" cy="1001.9" r="1.6"/><circle cx="1718.7" cy="1001.7" r="1.6"/><circle cx="1720.3" cy="994.5" r="1.6"/><circle cx="1721.7" cy="965.2" r="1.6"/><circle cx="1723.5" cy="934.0" r="1.6"/><circle cx="1725.4" cy="927.4" r="1.6"/><circle cx="1727.0" cy="914.1" r="1.6"/><circle cx="1728.7" cy="914.1" r="1.6"/><circle cx="1729.4" cy="914.1" r="1.6"/><circle cx="1730.7" cy="917.8" r="1.6"/><circle cx="1732.1" cy="914.1" r="1.6"/><circle cx="1733.7" cy="930.6" r="1.6"/><circle cx="1735.5" cy="955.1" r="1.6"/></g><circle cx="1077" cy="740.8" r="7.2" fill="#fafafa" stroke="#cfcfcf" stroke-width="1"/><line x1="1075.7" y1="737.2" x2="1075.7" y2="744.2" stroke="#888" stroke-width="0.8"/><line x1="1078.3" y1="737.2" x2="1078.3" y2="744.2" stroke="#888" stroke-width="0.8"/><circle cx="1736" cy="740.8" r="7.2" fill="#fafafa" stroke="#cfcfcf" stroke-width="1"/><line x1="1734.7" y1="737.2" x2="1734.7" y2="744.2" stroke="#888" stroke-width="0.8"/><line x1="1737.3" y1="737.2" x2="1737.3" y2="744.2" stroke="#888" stroke-width="0.8"/><circle cx="1382.2" cy="1051.4" r="6.4" fill="#e49b2b"/><text x="1392.7" y="1054.8" font-family="Liberation Sans" font-size="9.2" letter-spacing="-0.25" fill="#555">EL HIERRO</text></svg>
<div class="a" style="left:1039.8px;top:1077px;width:57.799999999999955px;height:22px;background:#fff;border-left:1px solid #b3b3b3;border-right:1px solid #b3b3b3;border-bottom:2.4px solid #1674c2;text-align:center;line-height:21px;font-size:10.4px;color:#4c4c4c">IA 7días</div>
<div class="a" style="left:1040.8px;top:1075.4px;width:55.799999999999955px;height:2px;background:#fff"></div>
<div class="a" style="left:1102.2px;top:1077px;width:63.5px;height:22px;background:#e4e4e4;border:1px solid #bdbdbd;border-bottom:2px solid #aaa;text-align:center;line-height:19px;font-size:10.4px;color:#4c4c4c">IA 14días</div>
<div class="a" style="left:1170.6px;top:1077px;width:68.20000000000005px;height:22px;background:#e4e4e4;border:1px solid #bdbdbd;border-bottom:2px solid #aaa;text-align:center;line-height:19px;font-size:10.4px;color:#4c4c4c">%test pos.</div>
<div class="a" style="left:1243px;top:1077px;width:95.59999999999991px;height:22px;background:#e4e4e4;border:1px solid #bdbdbd;border-bottom:2px solid #aaa;text-align:center;line-height:19px;font-size:10.4px;color:#4c4c4c">%test pos. 7días</div>
<div class="a" style="left:1343px;top:1077px;width:39px;height:22px;background:#e4e4e4;border:1px solid #bdbdbd;border-bottom:2px solid #aaa;text-align:center;line-height:19px;font-size:10.4px;color:#4c4c4c">Test</div>
<div class="a" style="left:1387.1px;top:1077px;width:74.10000000000014px;height:22px;background:#e4e4e4;border:1px solid #bdbdbd;border-bottom:2px solid #aaa;text-align:center;line-height:19px;font-size:10.4px;color:#4c4c4c">Acumulado</div>
<div class="a" style="left:1466.5px;top:1077px;width:47.90000000000009px;height:22px;background:#e4e4e4;border:1px solid #bdbdbd;border-bottom:2px solid #aaa;text-align:center;line-height:19px;font-size:10.4px;color:#4c4c4c">Diario</div>
</body></html>
